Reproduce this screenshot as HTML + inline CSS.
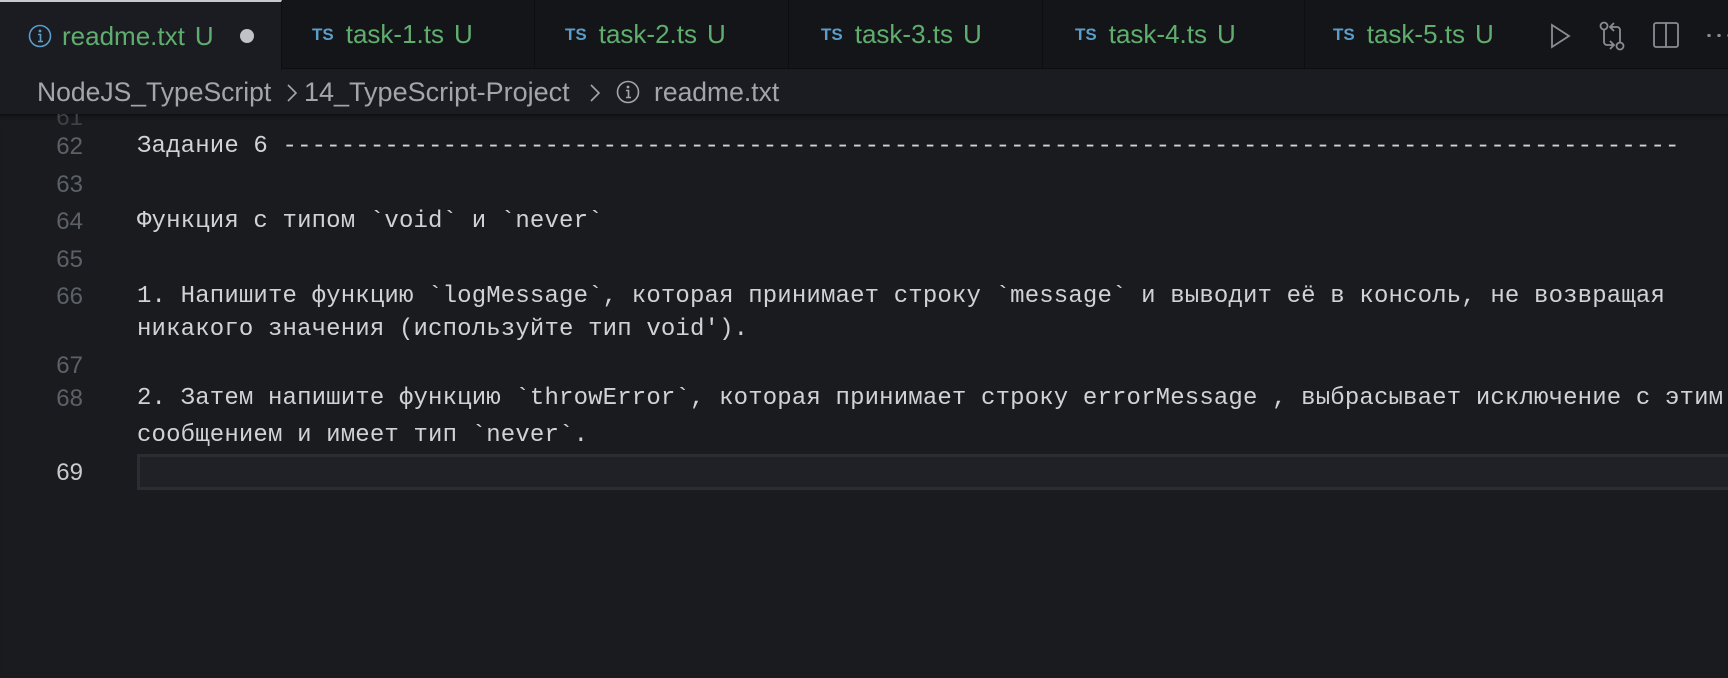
<!DOCTYPE html>
<html><head><meta charset="utf-8"><style>
*{margin:0;padding:0;box-sizing:border-box}
body{width:1728px;height:678px;background:#1a1b1f;overflow:hidden;position:relative;font-family:"Liberation Sans",sans-serif}
.tabs{position:absolute;left:0;top:0;width:1728px;height:69px;background:#141519;border-bottom:1px solid #0d0e10}
.tab{position:absolute;top:0;height:69px;border-right:1px solid #0d0e10;display:flex;align-items:center;font-size:26px;color:#5fae6e}
.tab .ts{color:#5b9ec9;font-size:17px;font-weight:bold;margin-right:12px}
.tab .u{margin-left:10px}
.active{background:#1b1c21;border-top:2px solid #c8c9cc;border-bottom:none;height:70px}
.bc{position:absolute;left:0;top:70px;width:1728px;height:44px;background:#1b1c21;color:#a3a5ab;font-size:26.5px}
.bc div{position:absolute;top:7px}
.ed{position:absolute;left:0;top:114px;width:1728px;height:564px;background:#1a1b1f;box-shadow:inset 0 6px 6px -6px #000}
.ln{position:absolute;left:0;width:83px;text-align:right;color:#5c6068;font-family:"Liberation Sans",sans-serif;font-size:24px}
.tx{position:absolute;left:137px;color:#d0d2d6;font-family:"Liberation Mono","DejaVu Sans Mono",monospace;font-size:24px;white-space:pre;letter-spacing:0.15px}
</style></head><body>
<div class="tabs">
 <div class="tab active" style="left:0;width:282px;padding-left:28px">
  <svg width="24" height="24" viewBox="0 0 24 24" style="margin-right:10px"><circle cx="12" cy="12" r="10.5" fill="none" stroke="#5b9ec9" stroke-width="1.6"/><circle cx="12" cy="7" r="1.4" fill="#5b9ec9"/><path d="M10 10.5h2.5v7M10 17.5h5" stroke="#5b9ec9" stroke-width="1.6" fill="none"/></svg>
  readme.txt<span class="u">U</span><span style="display:inline-block;width:14px;height:14px;border-radius:50%;background:#c0c2c6;margin-left:26px"></span></div>
 <div class="tab" style="left:282px;width:253px;padding-left:30px"><span class="ts">TS</span>task-1.ts<span class="u">U</span></div>
 <div class="tab" style="left:535px;width:254px;padding-left:30px"><span class="ts">TS</span>task-2.ts<span class="u">U</span></div>
 <div class="tab" style="left:789px;width:254px;padding-left:32px"><span class="ts">TS</span>task-3.ts<span class="u">U</span></div>
 <div class="tab" style="left:1043px;width:262px;padding-left:32px"><span class="ts">TS</span>task-4.ts<span class="u">U</span></div>
 <div class="tab" style="left:1305px;width:230px;border-right:none;padding-left:28px"><span class="ts">TS</span>task-5.ts<span class="u">U</span></div>
 <svg style="position:absolute;left:1548px;top:22px" width="24" height="28" viewBox="0 0 24 28"><path d="M4 3L21 14L4 25Z" fill="none" stroke="#8a8c92" stroke-width="1.8"/></svg>
 <svg style="position:absolute;left:1596px;top:20px" width="32" height="32" viewBox="0 0 32 32"><circle cx="8" cy="6" r="3.5" fill="none" stroke="#8a8c92" stroke-width="1.8"/><circle cx="24" cy="26" r="3.5" fill="none" stroke="#8a8c92" stroke-width="1.8"/><path d="M8 10v12a3 3 0 0 0 3 3h6M14 21l4 4-4 4M24 22V10a3 3 0 0 0-3-3h-6M18 3l-4 4 4 4" fill="none" stroke="#8a8c92" stroke-width="1.8"/></svg>
 <svg style="position:absolute;left:1652px;top:21px" width="28" height="28" viewBox="0 0 28 28"><rect x="2" y="2" width="24" height="24" rx="2" fill="none" stroke="#8a8c92" stroke-width="1.8"/><path d="M14 2v24" stroke="#8a8c92" stroke-width="1.8"/></svg>
 <div style="position:absolute;left:1704px;top:34px;width:30px;height:3px;background:radial-gradient(circle,#8a8c92 1.5px,transparent 2px) 0 0/10px 3px"></div>
</div>
<div class="ed">
 <div style="position:absolute;left:137px;top:340px;width:1600px;height:36px;border:3px solid #2b2d32;background:#202126"></div>
</div>
<div class="ln" style="top:104px;color:#3e4147">61</div>
<div class="ln" style="top:133px">62</div>
<div class="ln" style="top:171px">63</div>
<div class="ln" style="top:208px">64</div>
<div class="ln" style="top:246px">65</div>
<div class="ln" style="top:283px">66</div>
<div class="ln" style="top:352px">67</div>
<div class="ln" style="top:385px">68</div>
<div class="ln" style="top:459px;color:#c8cacd">69</div>
<div class="bc">
 <div style="left:37px">NodeJS_TypeScript</div>
 <svg style="position:absolute;left:285px;top:13px" width="14" height="20" viewBox="0 0 14 20"><path d="M3 2l8 8-8 8" fill="none" stroke="#a3a5ab" stroke-width="1.6"/></svg>
 <div style="left:304px;font-size:27px">14_TypeScript-Project</div>
 <svg style="position:absolute;left:588px;top:13px" width="14" height="20" viewBox="0 0 14 20"><path d="M3 2l8 8-8 8" fill="none" stroke="#a3a5ab" stroke-width="1.6"/></svg>
 <svg style="position:absolute;left:616px;top:10px" width="24" height="24" viewBox="0 0 24 24"><circle cx="12" cy="12" r="10.5" fill="none" stroke="#a3a5ab" stroke-width="1.6"/><circle cx="12" cy="7" r="1.4" fill="#a3a5ab"/><path d="M10 10.5h2.5v7M10 17.5h5" stroke="#a3a5ab" stroke-width="1.6" fill="none"/></svg>
 <div style="left:654px">readme.txt</div>
</div>
<div class="tx" style="top:133px">Задание 6 ------------------------------------------------------------------------------------------------</div>
<div class="tx" style="top:208px">Функция с типом `void` и `never`</div>
<div class="tx" style="top:283px">1. Напишите функцию `logMessage`, которая принимает строку `message` и выводит её в консоль, не возвращая</div>
<div class="tx" style="top:316px">никакого значения (используйте тип void').</div>
<div class="tx" style="top:385px">2. Затем напишите функцию `throwError`, которая принимает строку errorMessage , выбрасывает исключение с этим</div>
<div class="tx" style="top:422px">сообщением и имеет тип `never`.</div>
</body></html>
